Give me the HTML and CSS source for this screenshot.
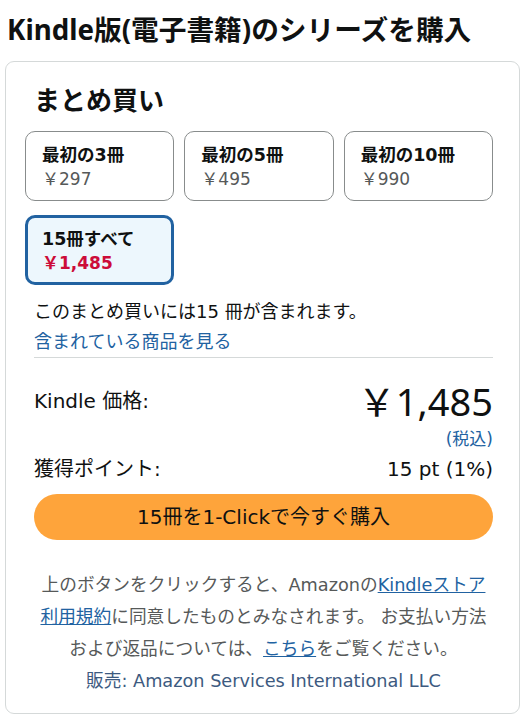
FILE: index.html
```html
<!DOCTYPE html>
<html lang="ja">
<head>
<meta charset="utf-8">
<title>Kindle版のシリーズを購入</title>
<link rel="stylesheet" href="styles.css">
</head>
<body>
<div class="page">
  <h1 class="title">Kindle版(電子書籍)のシリーズを購入</h1>
  <section class="card">
    <h2 class="heading">まとめ買い</h2>
    <div class="options">
      <div class="option">
        <div class="opt-label">最初の3冊</div>
        <div class="opt-price">￥297</div>
      </div>
      <div class="option">
        <div class="opt-label">最初の5冊</div>
        <div class="opt-price">￥495</div>
      </div>
      <div class="option">
        <div class="opt-label">最初の10冊</div>
        <div class="opt-price">￥990</div>
      </div>
      <div class="option selected">
        <div class="opt-label">15冊すべて</div>
        <div class="opt-price">￥1,485</div>
      </div>
    </div>
    <p class="desc">このまとめ買いには15 冊が含まれます。</p>
    <a class="link see" href="#">含まれている商品を見る</a>
    <hr class="divider">
    <div class="row price-row">
      <span class="row-label">Kindle 価格:</span>
      <span class="big-price">￥1,485</span>
    </div>
    <div class="tax"><span class="link">(税込)</span></div>
    <div class="row points-row">
      <span class="row-label">獲得ポイント:</span>
      <span class="points">15 pt (1%)</span>
    </div>
    <button class="buy">15冊を1-Clickで今すぐ購入</button>
    <p class="note">上のボタンをクリックすると、Amazonの<a class="ulink" href="#">Kindleストア<br>利用規約</a>に同意したものとみなされます。 お支払い方法<br>および返品については、<a class="ulink" href="#">こちら</a>をご覧ください。<br><span class="seller">販売: Amazon Services International LLC</span></p>
  </section>
</div>
</body>
</html>
```

FILE: styles.css
```css
html, body {
  margin: 0;
  padding: 0;
  background: #ffffff;
}

body {
  font-family: "DejaVu Sans", "Noto Sans CJK JP", sans-serif;
  color: #0f1111;
}

.page {
  padding: 11px 4px 0 5px;
}

.title {
  margin: 0 0 14px 0;
  padding-left: 2px;
  font-family: "Noto Sans", "Noto Sans CJK JP", sans-serif;
  font-size: 27.7px;
  line-height: 36px;
  font-weight: 700;
  color: #0f1111;
  white-space: nowrap;
}

.card {
  border: 1px solid #d5d9d9;
  border-radius: 9px;
  padding: 21px 26px 16px 28px;
}

.heading {
  margin: 0 0 14px 0;
  font-family: "Noto Sans", "Noto Sans CJK JP", sans-serif;
  font-size: 26px;
  line-height: 34px;
  font-weight: 700;
}

.options {
  display: grid;
  grid-template-columns: repeat(3, 1fr);
  column-gap: 10px;
  row-gap: 14px;
  margin-left: -9px;
}

.option {
  height: 70px;
  box-sizing: border-box;
  border: 1px solid #888c8c;
  border-radius: 10px;
  padding: 11px 8px 8px 16px;
  background: #ffffff;
}

.option.selected {
  border: 3px solid #2162a1;
  padding: 9px 6px 6px 14px;
  background: #edf7fd;
}

.opt-label {
  font-size: 17.5px;
  line-height: 24px;
  font-weight: 700;
  white-space: nowrap;
}

.opt-price {
  font-size: 17px;
  line-height: 24px;
  color: #565959;
}

.selected .opt-price {
  color: #cc0c39;
  font-weight: 700;
}

.desc {
  margin: 12px 0 0 0;
  font-size: 18px;
  line-height: 30px;
}

.link {
  color: #2162a1;
  text-decoration: none;
}

.see {
  display: block;
  font-size: 18px;
  line-height: 30px;
}

.divider {
  margin: 0;
  border: 0;
  border-top: 1px solid #d5d9d9;
}

.row {
  display: flex;
  justify-content: space-between;
  align-items: center;
}

.price-row {
  margin-top: 21px;
}

.row-label {
  font-size: 20px;
  line-height: 28px;
}

.big-price {
  font-family: "Noto Sans", "Noto Sans CJK JP", sans-serif;
  font-size: 38px;
  line-height: 44px;
}

.tax {
  margin-top: 5px;
  text-align: right;
  font-size: 17px;
  line-height: 22px;
}

.points-row {
  margin-top: 5px;
}

.points {
  font-size: 20px;
  line-height: 28px;
}

.buy {
  display: block;
  width: 100%;
  height: 46px;
  margin-top: 11px;
  border: 0;
  border-radius: 23px;
  background: #fea43b;
  color: #0f1111;
  font-family: inherit;
  font-size: 20px;
  line-height: 28px;
  padding: 0;
}

.note {
  margin: 29px 0 0 0;
  text-align: center;
  font-size: 17.7px;
  line-height: 32px;
  color: #565959;
}

.ulink {
  color: #2162a1;
  text-decoration: underline;
}

.seller {
  color: #3d5a80;
}
```
